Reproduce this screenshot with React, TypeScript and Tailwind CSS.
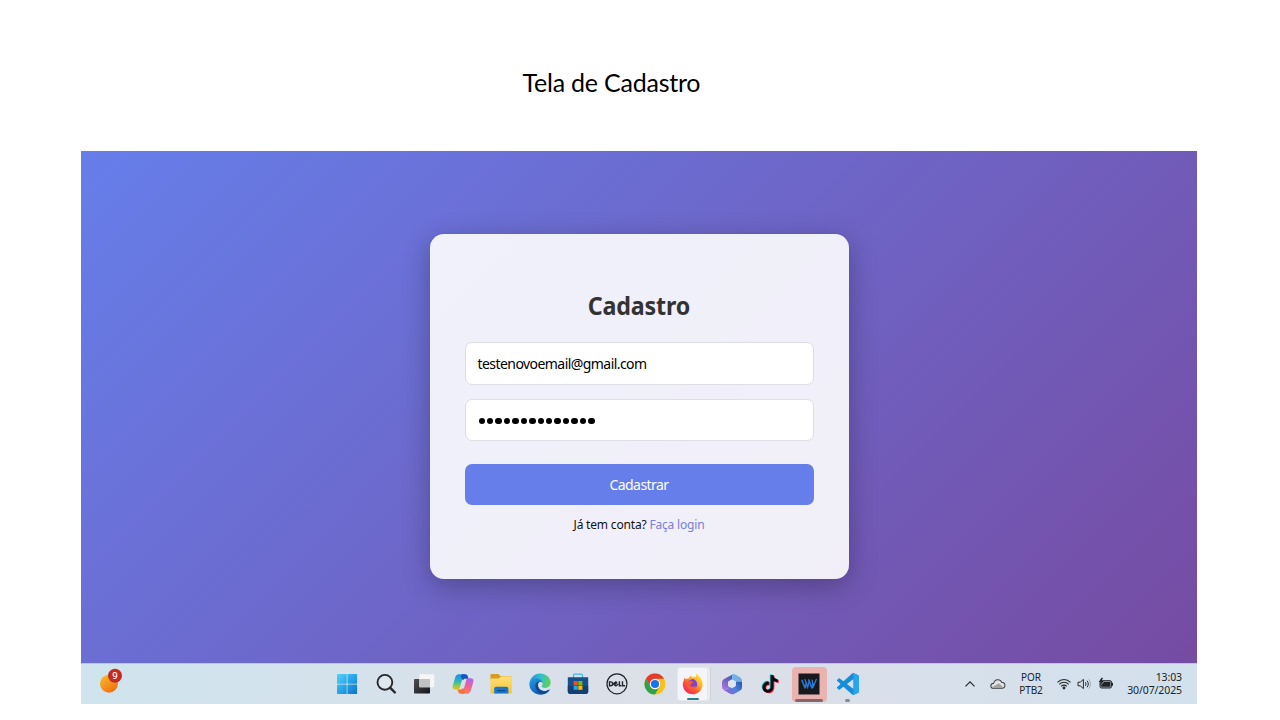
import type { ReactNode } from "react";

const NOTE =
  "M12.525.02c1.31-.02 2.61-.01 3.91-.02.08 1.53.63 3.09 1.75 4.17 1.12 1.11 2.7 1.62 4.24 1.79v4.03c-1.44-.05-2.89-.35-4.2-.97-.57-.26-1.1-.59-1.62-.93-.01 2.92.01 5.84-.02 8.75-.08 1.4-.54 2.79-1.35 3.94-1.31 1.92-3.58 3.17-5.91 3.21-1.43.08-2.86-.31-4.08-1.03-2.02-1.19-3.44-3.37-3.65-5.71-.02-.5-.03-1-.01-1.49.18-1.9 1.12-3.72 2.58-4.96 1.66-1.44 3.98-2.13 6.15-1.72.02 1.48-.04 2.96-.04 4.44-.99-.32-2.15-.23-3.02.37-.63.41-1.11 1.04-1.36 1.75-.21.51-.15 1.07-.14 1.61.24 1.64 1.82 3.02 3.5 2.87 1.12-.01 2.19-.66 2.77-1.61.19-.33.4-.67.41-1.06.1-1.79.06-3.57.07-5.36.01-4.03-.01-8.05.02-12.07z";

function StartIcon() {
  return (
    <svg className="h-[22px] w-[22px]" viewBox="0 0 22 22">
      <defs>
        <linearGradient id="start" x1="0" y1="0" x2="22" y2="22" gradientUnits="userSpaceOnUse">
          <stop stopColor="#5fd3fb" />
          <stop offset=".5" stopColor="#27a5e8" />
          <stop offset="1" stopColor="#0b6fc4" />
        </linearGradient>
      </defs>
      <g fill="url(#start)">
        <rect x="1" y="1" width="9.7" height="9.7" rx=".6" />
        <rect x="11.4" y="1" width="9.7" height="9.7" rx=".6" />
        <rect x="1" y="11.4" width="9.7" height="9.7" rx=".6" />
        <rect x="11.4" y="11.4" width="9.7" height="9.7" rx=".6" />
      </g>
    </svg>
  );
}

function SearchIcon() {
  return (
    <svg className="h-[22px] w-[22px]" viewBox="0 0 22 22" fill="none" stroke="#25282c" strokeLinecap="round">
      <circle cx="9.9" cy="9.3" r="7.4" strokeWidth="1.9" fill="#dfe7ef" />
      <path d="M15.300 14.800l4.600 4.700" strokeWidth="2.4" />
    </svg>
  );
}

function TaskViewIcon() {
  return (
    <svg className="h-[22px] w-[22px]" viewBox="0 0 22 22">
      <defs>
        <linearGradient id="tvA" x1="2" y1="6" x2="17" y2="20" gradientUnits="userSpaceOnUse">
          <stop stopColor="#4a4c4f" />
          <stop offset="1" stopColor="#151719" />
        </linearGradient>
      </defs>
      <rect x="1" y="6" width="16" height="14.500" rx=".8" fill="url(#tvA)" />
      <rect x="6.300" y="1.200" width="15" height="13" rx=".8" fill="#f6f6f6" />
      <rect x="6.300" y="6" width="10.700" height="8.200" fill="#c0c1c3" />
    </svg>
  );
}

function CopilotIcon() {
  return (
    <svg className="h-[22px] w-[22px]" viewBox="0 0 22 22">
      <defs>
        <linearGradient id="cpA" x1="6" y1="1" x2="5" y2="17" gradientUnits="userSpaceOnUse">
          <stop stopColor="#1b8ee8" />
          <stop offset=".45" stopColor="#2ab7b9" />
          <stop offset=".75" stopColor="#97c93f" />
          <stop offset="1" stopColor="#f2c51c" />
        </linearGradient>
        <linearGradient id="cpB" x1="17" y1="5" x2="12" y2="21" gradientUnits="userSpaceOnUse">
          <stop stopColor="#a969e9" />
          <stop offset=".45" stopColor="#ee5f9e" />
          <stop offset="1" stopColor="#fb8a4c" />
        </linearGradient>
      </defs>
      <path d="M6.800 1.200h6.400l-1.700 4.100c-.9.300-1.300 1-1.600 2L8 14c-.5 1.800-1.200 2.700-2.800 2.700H3.300c-2.200 0-3.200-1.500-2.600-3.600l2.400-8.400c.6-2.200 1.800-3.500 3.700-3.500z" fill="url(#cpA)" />
      <path d="M10 1.200h3.200c1.500 0 2.200.8 2.600 2l.8 2.500h-3.300c-1.300 0-1.900.6-2.400 1.700L8.700 3.500z" fill="#1955bd" />
      <path d="M15.200 20.800H8.800l1.700-4.100c.9-.3 1.300-1 1.600-2L14 8c.5-1.800 1.200-2.700 2.800-2.700h1.900c2.200 0 3.200 1.500 2.600 3.600l-2.400 8.400c-.6 2.200-1.800 3.500-3.700 3.500z" fill="url(#cpB)" />
      <path d="M12 20.800H8.800c-1.500 0-2.200-.8-2.600-2l-.8-2.300h3c1.500 0 2.100-.6 2.600-1.700l2.100 4z" fill="#f4743b" />
    </svg>
  );
}

function ExplorerIcon() {
  return (
    <svg className="h-[22px] w-[22px]" viewBox="0 0 22 22">
      <defs>
        <linearGradient id="folder" x1="0" y1="3" x2="0" y2="20" gradientUnits="userSpaceOnUse">
          <stop stopColor="#ffe07a" />
          <stop offset="1" stopColor="#f8c435" />
        </linearGradient>
      </defs>
      <path d="M.5 2.200c0-.7.5-1.200 1.200-1.200h5.900c.8 0 1.200.3 1.600.8l1.300 1.500H21c.4 0 .6.300.6.700V8H.5z" fill="#d99d17" />
      <path d="M.5 5.500h7.700c.7 0 1.100-.4 1.500-.8l1-1.100H21c.5 0 .8.300.8.800v15.300c0 .5-.4.800-.9.800H1.400c-.5 0-.9-.4-.9-.9z" fill="url(#folder)" />
      <path d="M4.200 20.500v-4.800c0-1.200.8-2 2-2h10.200c1.200 0 2 .8 2 2v4.800z" fill="#1976c9" />
      <rect x="7" y="16.900" width="8.600" height="1.400" rx=".7" fill="#0a4c93" />
    </svg>
  );
}

function EdgeIcon() {
  return (
    <svg className="h-[22px] w-[22px]" viewBox="0 0 22 22">
      <defs>
        <linearGradient id="edA" x1="2" y1="5" x2="21" y2="9" gradientUnits="userSpaceOnUse">
          <stop stopColor="#269bd9" />
          <stop offset=".5" stopColor="#32c1c9" />
          <stop offset="1" stopColor="#63d158" />
        </linearGradient>
        <linearGradient id="edB" x1="2" y1="7" x2="12" y2="21" gradientUnits="userSpaceOnUse">
          <stop stopColor="#1f94df" />
          <stop offset="1" stopColor="#1258ad" />
        </linearGradient>
      </defs>
      <path d="M.5 10.500C.9 4.800 5.400.4 11 .4c6.200 0 10.700 4.400 10.700 9.200 0 3.400-2.500 5.400-5.400 5.400-2.600 0-3.900-.9-3.900-1.700 0-.7 1-.9 1-2.800 0-2.600-2.600-4.700-6.200-4.700-3.200 0-5.900 1.600-6.700 4.700z" fill="url(#edA)" />
      <path d="M.4 11.300c0-3.500 2.800-6.100 6.600-6.100 3.800 0 6.400 2.400 6.400 5-.6-1-1.500-1.300-2.600-1.100-1.500.3-2.200 1.900-2.100 3.500.3 3.300 3 5.500 6.400 5.500 2 0 3.600-.6 5.200-1.500.4-.2.700.1.500.5-1.900 2.900-5.200 4.700-8.600 4.700C5.600 21.800.4 17.300.4 11.300z" fill="url(#edB)" />
      <path d="M6.500 13.200c-.4-2.900 1.400-5 4.300-4.300-3 .9-2.500 8 4.300 9.200 1.500.2 3.300-.3 4.800-1.200-2 2.900-5 4.300-7.500 3.900-3.300-.6-5.500-3.700-5.900-7.600z" fill="#0d4a97" />
      <path d="M10.900 9.200c1.400-.3 2.500.5 2.500 1.700 0 1.200-.9 1.900-.9 2.500 0 1 1.500 1.700 3.900 1.700 1.500 0 2.700-.3 3.600-.9-.9 1.600-2.700 2.400-4.700 2.400-3.500 0-5.800-2.300-5.900-4.900 0-1.200.5-2.200 1.500-2.500z" fill="#dbe4ec" />
    </svg>
  );
}

function StoreIcon() {
  return (
    <svg className="h-[22px] w-[22px]" viewBox="0 0 22 22">
      <path d="M6.500 5V2.400c0-.8.400-1.200 1.200-1.200h6.600c.8 0 1.200.4 1.200 1.200V5" fill="none" stroke="#41b6ee" strokeWidth="1.300" />
      <path d="M.8 4.200h20.400v14.300c0 1.500-1 2.500-2.500 2.500H3.300C1.800 21 .8 20 .8 18.500z" fill="#15508a" />
      <path d="M.8 13h20.400v5.500c0 1.500-1 2.500-2.500 2.500H3.300C1.800 21 .8 20 .8 18.500z" fill="#143f70" />
      <rect x="6.600" y="8" width="4.100" height="4.100" fill="#f25022" />
      <rect x="11.300" y="8" width="4.100" height="4.100" fill="#7fba00" />
      <rect x="6.600" y="12.700" width="4.100" height="4.100" fill="#20a8ee" />
      <rect x="11.300" y="12.700" width="4.100" height="4.100" fill="#ffb900" />
    </svg>
  );
}

function DellIcon() {
  return (
    <svg className="h-[22px] w-[22px]" viewBox="0 0 22 22" fill="none" stroke="#202327">
      <circle cx="11" cy="10.800" r="10" strokeWidth="1.200" />
      <g strokeWidth="1.400">
        <path d="M3.500 8.900v3.900h1.200c2.700 0 2.700-3.900 0-3.900z" />
        <path d="M7.300 10.900l2.600-2 1 .8M7.300 10.900l2.600 2 2.500-1.900M8.800 11.100l2.300-1.700" />
        <path d="M13.400 8.200v4.600h2M16.500 8.200v4.600h2.600" />
      </g>
    </svg>
  );
}

function ChromeIcon() {
  return (
    <svg className="h-[22px] w-[22px]" viewBox="0 0 22 22">
      <circle cx="11" cy="11" r="10.500" fill="#fbc116" />
      <path d="M11 .5a10.500 10.500 0 0 0-9.100 5.250L6.460 13.620 11 5.750h9.100A10.500 10.500 0 0 0 11 .5z" fill="#e33b2e" />
      <path d="M1.900 5.750A10.500 10.500 0 0 0 11 21.500l4.550-7.880A5.250 5.250 0 0 1 6.460 13.620z" fill="#2ba24c" />
      <circle cx="11" cy="11" r="5.200" fill="#fff" />
      <circle cx="11" cy="11" r="4.100" fill="#1b73e8" />
    </svg>
  );
}

function FirefoxIcon() {
  return (
    <svg className="h-[22px] w-[22px]" viewBox="0 0 22 22">
      <defs>
        <linearGradient id="fx" x1="18" y1="3" x2="4" y2="19" gradientUnits="userSpaceOnUse">
          <stop stopColor="#ffe138" />
          <stop offset=".35" stopColor="#ffad22" />
          <stop offset=".65" stopColor="#ff5a34" />
          <stop offset="1" stopColor="#f02c62" />
        </linearGradient>
      </defs>
      <path d="M2.900 4.500c.2 1 .6 1.400 1 1.800.7-.7 1.600-.9 2.600-.8C7.100 4 8.200 3 9.600 2.500c-.3 1 .2 1.800 1 2.300 1.300.2 2.400.4 3.200 1 .2-2-.3-3.700 1-5.300.8 1.800 3.600 3.100 4.500 5.700 2.200 4 1.600 8.900-1.400 12-4.100 4.200-10.800 4.100-14.600-.2C.2 14.400.3 9.800 2 7.100c0-1 .3-1.900.9-2.600z" fill="url(#fx)" />
      <circle cx="11.300" cy="10.500" r="4.600" fill="#7645d8" />
      <path d="M5.500 8c1.700-.9 3.300-.2 3.900.6 1 .1 1.800.1 1.900.5 0 .9-1.600 1.100-2 1.700-.2 1-.9 1.300-1.900 1.300 1.200 1.800 3.500 2.100 5 1.300 1-.6 1.500-.7 1.800-.2-.5 2-3.800 3.800-6.600 2.300C5 14 4.500 10.500 5.500 8z" fill="#ff5b31" />
      <path d="M10.800 3.700c2.300-.2 5 1.200 5.500 4.300.6 2.100 0 4-1.200 5.200.8-2.500-.2-5.100-2.900-6.600z" fill="#ffb52c" />
    </svg>
  );
}

function OfficeIcon() {
  return (
    <svg className="h-[22px] w-[22px]" viewBox="0 0 22 22">
      <defs>
        <linearGradient id="ofA" x1="3" y1="17" x2="11" y2="2" gradientUnits="userSpaceOnUse">
          <stop stopColor="#ab78e6" />
          <stop offset=".6" stopColor="#7162c1" />
          <stop offset="1" stopColor="#455aa0" />
        </linearGradient>
        <linearGradient id="ofB" x1="20" y1="9" x2="6" y2="20" gradientUnits="userSpaceOnUse">
          <stop stopColor="#245da9" />
          <stop offset=".5" stopColor="#507fdf" />
          <stop offset="1" stopColor="#8c66d2" />
        </linearGradient>
        <linearGradient id="ofC" x1="10" y1="2" x2="20" y2="10" gradientUnits="userSpaceOnUse">
          <stop stopColor="#6dbcf0" />
          <stop offset="1" stopColor="#7aa5d9" />
        </linearGradient>
      </defs>
      <path d="M12.500.9L4 5.500C2 6.600 1 7.800 1 9.600v4.200c0 2.500 2.100 3.500 4 2.700l4.300-2.300-2-1.200V8.700L11 6.500l2-1.300z" fill="url(#ofA)" />
      <path d="M12.500.9c1 0 1.600.4 2.400.9l4 2.500c1.400.9 2.100 2.100 2.100 3.900v4.300l-6.200-3.800L11 6.500V2.400c0-.9.600-1.500 1.500-1.500z" fill="url(#ofC)" />
      <path d="M21 9v5c0 1.700-.7 2.800-2.200 3.700L14 20.600c-1.900 1.100-3.600 1.100-5.500 0l-5.400-3.300c-.7-.4-1.100-.9-1.400-1.500 1.100 1 2.400 1.200 3.600.6l5.700-3.100 3.700-2.100V8.700z" fill="url(#ofB)" />
      <path d="M11 6.400l3.900 2.200v4.500L11 15.300l-3.900-2.200V8.600z" fill="#dfe5ed" />
    </svg>
  );
}

function NoteIcon() {
  return (
    <svg className="h-[20px] w-[20px]" viewBox="0 -1 27 27">
      <path d={NOTE} fill="#20dfe3" transform="translate(-.8 -.7)" />
      <path d={NOTE} fill="#ff2856" transform="translate(1.500 1.100)" />
      <path d={NOTE} fill="#08080b" transform="translate(.3 .2)" />
    </svg>
  );
}

function WaveIcon() {
  return (
    <svg className="h-[22px] w-[22px]" viewBox="0 0 22 22" fill="none" strokeLinecap="round">
      <rect x=".5" y=".5" width="21" height="21" fill="#171a1d" />
      <path d="M4 7.500l3 7.300M10.800 7l3.100 8M7.200 14.800L8.500 10M14 15l1-4" stroke="#2775cf" strokeWidth="1.700" />
      <path d="M7 6.500l2.700 7.800L11.200 8M14 7l1.500 6.500 2.800-7.200" stroke="#2d7fdd" strokeWidth="1.200" />
    </svg>
  );
}

function CodeIcon() {
  return (
    <svg className="h-[22px] w-[22px]" viewBox="0 0 24 24">
      <path
        fill="#168dd8"
        d="M23.150 2.587L18.210.210a1.494 1.494 0 0 0-1.705.290l-9.460 8.630-4.120-3.128a.999.999 0 0 0-1.276.057L.327 7.261A1 1 0 0 0 .326 8.740L3.899 12 .326 15.260a1 1 0 0 0 .001 1.479L1.650 17.940a.999.999 0 0 0 1.276.057l4.120-3.128 9.460 8.630a1.492 1.492 0 0 0 1.704.290l4.942-2.377A1.500 1.500 0 0 0 24 20.060V3.939a1.500 1.500 0 0 0-.850-1.352zm-5.146 14.861L10.826 12l7.178-5.448v10.896z"
      />
      <path d="M18 .1l5.150 2.487c.55.250.85.750.85 1.352V20.060c0 .6-.3 1.100-.85 1.352L18 23.900z" fill="#27a5ef" />
    </svg>
  );
}

function TaskCell({ children }: { children: ReactNode }) {
  return <div className="flex h-full w-[38.5px] shrink-0 items-center justify-center">{children}</div>;
}

function Taskbar() {
  return (
    <footer className="flex h-[41px] items-stretch border-t border-[#bdc5da] bg-linear-to-r from-[#cfe4ee] via-[#dcdfe8] via-55% to-[#d2e1ed] font-['Noto_Sans','Open_Sans',sans-serif] text-[#202226]">
      <div className="w-[246.75px] shrink-0">
        <svg className="ml-[16px] h-[40px] w-[28px]" viewBox="0 0 28 40">
          <defs>
            <linearGradient id="weather" x1="6" y1="12" x2="18" y2="29" gradientUnits="userSpaceOnUse">
              <stop stopColor="#f8b62c" />
              <stop offset="1" stopColor="#ef6a0b" />
            </linearGradient>
          </defs>
          <circle cx="12" cy="19.700" r="9" fill="url(#weather)" />
          <circle cx="18" cy="11.800" r="7" fill="#c42b1c" />
          <text x="18" y="15.200" textAnchor="middle" fontSize="9.500" fontWeight="500" fill="#fff">9</text>
        </svg>
      </div>
      <div className="flex">
        <TaskCell><StartIcon /></TaskCell>
        <TaskCell><SearchIcon /></TaskCell>
        <TaskCell><TaskViewIcon /></TaskCell>
        <TaskCell><CopilotIcon /></TaskCell>
        <TaskCell><ExplorerIcon /></TaskCell>
        <TaskCell><EdgeIcon /></TaskCell>
        <TaskCell><StoreIcon /></TaskCell>
        <TaskCell><DellIcon /></TaskCell>
        <TaskCell><ChromeIcon /></TaskCell>
        <TaskCell>
          <div className="-ml-[2px] flex h-[34px] w-[31px] flex-col items-center justify-between rounded-[3px] border border-[#e6e8ee] bg-[#f4f5fa] pt-[5px] shadow-[2px_0_0_#e9ebf1,3px_0_0_#cfd2da]">
            <FirefoxIcon />
            <span className="h-[2.5px] w-[12px] rounded-full bg-[#2a7f8d]" />
          </div>
        </TaskCell>
        <TaskCell><OfficeIcon /></TaskCell>
        <TaskCell><NoteIcon /></TaskCell>
        <TaskCell>
          <div className="flex h-[35px] w-[35px] flex-col items-center justify-between rounded-[4px] bg-[#ebb3b0] pt-[6px]">
            <WaveIcon />
            <span className="h-[2.500px] w-[28px] rounded-full bg-[#8d6466]" />
          </div>
        </TaskCell>
        <TaskCell>
          <div className="flex h-[35px] w-[22px] flex-col items-center justify-between pt-[6px]">
            <CodeIcon />
            <span className="h-[2.500px] w-[5px] rounded-full bg-[#858b92]" />
          </div>
        </TaskCell>
      </div>
      <div className="ml-auto flex items-center pr-[15px]">
        <svg className="h-[12px] w-[12px]" viewBox="0 0 12 12" fill="none" stroke="#25282c" strokeWidth="1.200">
          <path d="M1.500 8.300L6 3.800l4.500 4.500" />
        </svg>
        <svg className="ml-[14px] h-[12px] w-[16px]" viewBox="0 0 17 12">
          <path d="M4 10.600C-.2 10.600 0 5.700 3.800 5.300 5 .3 11 .3 12.400 4.200c4.600.2 4.500 6.400.4 6.400z" fill="#e4e3e1" stroke="#393c40" strokeWidth="1.100" />
          <path d="M2 9.400l7.500-4.200 4.700 4.400-1.400.7H4c-1 0-1.500-.3-2-.9z" fill="#a5a3a1" />
        </svg>
        <div className="ml-[12px] w-[26px] text-center text-[10px] leading-[13.500px] tracking-[-0.1px]">
          <div>POR</div>
          <div className="whitespace-nowrap">PTB2</div>
        </div>
        <svg className="ml-[12px] h-[14px] w-[16px]" viewBox="0 0 16 14" fill="none" stroke="#25282c" strokeWidth="1.100">
          <path d="M1.500 5.300c3.700-3.700 9.300-3.700 13 0M3.300 7.300c2.700-2.700 6.700-2.700 9.400 0M5.200 9.300c1.600-1.600 4-1.600 5.600 0" />
          <circle cx="8" cy="11" r=".9" fill="#25282c" />
        </svg>
        <svg className="ml-[5px] h-[14px] w-[14px]" viewBox="0 0 14 14" fill="none" stroke="#25282c" strokeWidth="1">
          <path d="M1 5.200h2.200L6.400 2.400v9.200L3.200 8.800H1z" />
          <path d="M8.300 5.200c.9 1 .9 2.600 0 3.600M10 3.700c1.700 1.800 1.700 4.800 0 6.600" />
          <path d="M11.600 2.400c2.400 2.600 2.400 6.600 0 9.200" opacity=".3" />
        </svg>
        <svg className="ml-[7px] h-[14px] w-[16px]" viewBox="0 0 16 14">
          <rect x="2" y="3.700" width="11.500" height="7.300" rx="1.500" fill="#9aa2aa" stroke="#25282c" />
          <path d="M3.200 9.800V7.800l3-2.800h6.100v4.800zM13.800 5.700h1.200v3h-1.200z" fill="#202326" />
          <path d="M3.400.8L.8 4.900h1.900L1.900 8.600l3.800-4.700H3.800l1.100-3.100z" fill="#202326" />
        </svg>
        <div className="ml-[8px] w-[60px] text-right text-[10.500px] leading-[13.500px] tracking-[-0.1px]">
          <div>13:03</div>
          <div>30/07/2025</div>
        </div>
      </div>
    </footer>
  );
}

function SignUpCard() {
  return (
    <form className="flex h-[345px] w-[419px] flex-col items-center rounded-[14px] bg-white/90 px-[35px] pt-[54px] shadow-[0_7px_28px_rgba(0,0,0,0.28)]">
      <h2 className="h-[54px] text-[25px] leading-[35px] font-bold text-[#333]">
        <span className="inline-block origin-center scale-x-[0.93] tracking-[-0.2px]">Cadastro</span>
      </h2>
      <div className="flex h-[43px] w-full items-center rounded-[7px] border border-[#dddde3] bg-white px-[12px] text-[14px] tracking-[-0.560px] text-black">
        testenovoemail@gmail.com
      </div>
      <div className="mt-[14px] flex h-[42px] w-full items-center gap-[2.050px] rounded-[7px] border border-[#dddde3] bg-white px-[13px] pt-[2px]">
        {Array.from({ length: 14 }, (_, i) => (
          <span key={i} className="h-[6.400px] w-[6.400px] rounded-full bg-black" />
        ))}
      </div>
      <button type="button" className="mt-[23px] h-[41px] w-full rounded-[7px] bg-[#667eea] text-[14px] tracking-[-0.550px] text-white">
        Cadastrar
      </button>
      <p className="mt-[11px] text-[12px] leading-[18px] tracking-[-0.180px] whitespace-nowrap text-[#111]">
        Já tem conta? <a className="text-[#7482dc]">Faça login</a>
      </p>
    </form>
  );
}

export default function App() {
  return (
    <div className="h-[720px] w-[1280px] overflow-hidden bg-white">
      <header className="h-[151px] pt-[66px] pl-[522.500px]">
        <h1 className="font-['Lato',sans-serif] text-[25px] leading-[33px] tracking-[-0.220px] whitespace-nowrap text-black">Tela de Cadastro</h1>
      </header>
      <main className="ml-[81px] w-[1116px] font-['Noto_Sans','Open_Sans',sans-serif]">
        <section className="flex h-[512px] justify-center bg-[linear-gradient(135deg,#667eea_0%,#764ba2_100%)] pt-[83px]">
          <SignUpCard />
        </section>
        <Taskbar />
      </main>
    </div>
  );
}
